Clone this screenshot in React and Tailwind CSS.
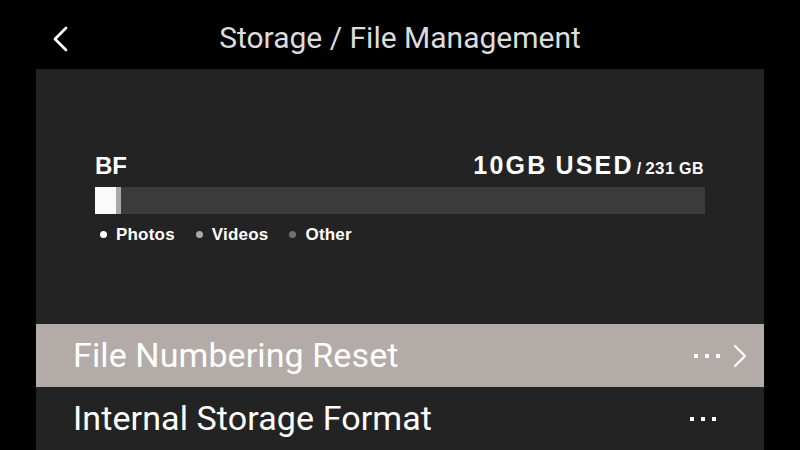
const legend = [
  { label: 'Photos', dot: 'bg-white' },
  { label: 'Videos', dot: 'bg-[#a9a9a9]' },
  { label: 'Other', dot: 'bg-[#707070]' },
];

const Dots = () => (
  <div className="flex items-center gap-[7px]">
    <span className="w-[4px] h-[4px] bg-white" />
    <span className="w-[4px] h-[4px] bg-white" />
    <span className="w-[4px] h-[4px] bg-white" />
  </div>
);

const App = () => {
  return (
    <div className="w-[800px] h-[450px] bg-black overflow-hidden font-['Roboto',sans-serif]">
      {/* header */}
      <div className="h-[69px] flex items-center relative">
        <svg className="absolute left-[50px] top-[25px]" width="22" height="28" viewBox="0 0 22 28" fill="none">
          <polyline points="16,3 5,14 16,25" stroke="white" strokeWidth="2.8" strokeLinecap="round" strokeLinejoin="round" />
        </svg>
        <h1 className="w-full text-center text-[30px] text-[#dcdcdc] pt-[6px]">Storage / File Management</h1>
      </div>

      <div className="mx-[36px] bg-[#232323] h-[381px] flex flex-col">
        {/* storage usage */}
        <div className="h-[256px] px-[59px] pt-[85px] font-['Liberation_Sans',sans-serif] text-white">
          <div className="flex items-end justify-between h-[24px]">
            <span className="text-[24px] font-bold leading-none">BF</span>
            <span className="font-bold leading-none pr-[1px]">
              <span className="text-[25px] tracking-[2.2px]">10GB</span>
              <span className="text-[25px] tracking-[2.2px] ml-[8px]">USED</span>
              <span className="text-[16px] ml-[3px]">/</span>
              <span className="text-[17px] ml-[4px] tracking-[0.5px]">231</span>
              <span className="text-[16px] ml-[4px] tracking-[0.5px]">GB</span>
            </span>
          </div>
          <div className="mt-[9px] h-[27px] bg-[#3b3b3b] flex">
            <div className="w-[21px] bg-[#fafafa]" />
            <div className="w-[5px] bg-[#a8a8a8]" />
          </div>
          <div className="mt-[8px] flex items-center gap-[21px] pl-[5px] text-[17px] font-bold tracking-[0.2px]">
            {legend.map((l) => (
              <div key={l.label} className="flex items-center gap-[9px]">
                <span className={`w-[7px] h-[7px] rounded-full ${l.dot}`} />
                <span>{l.label}</span>
              </div>
            ))}
          </div>
        </div>

        {/* rows */}
        <div className="h-[63px] bg-[#b2aba7] flex items-center justify-between pl-[37px] pr-[16px]">
          <span className="text-[34px] text-white tracking-[0.1px]">File Numbering Reset</span>
          <div className="flex items-center gap-[12px]">
            <Dots />
            <svg width="16" height="24" viewBox="0 0 16 24" fill="none">
              <polyline points="3,2 13,12 3,22" stroke="white" strokeWidth="2.4" strokeLinecap="round" strokeLinejoin="round" />
            </svg>
          </div>
        </div>
        <div className="h-[63px] flex items-center justify-between pl-[37px] pr-[48px]">
          <span className="text-[34px] text-white tracking-[0.1px]">Internal Storage Format</span>
          <Dots />
        </div>
      </div>
    </div>
  );
};

export default App;
